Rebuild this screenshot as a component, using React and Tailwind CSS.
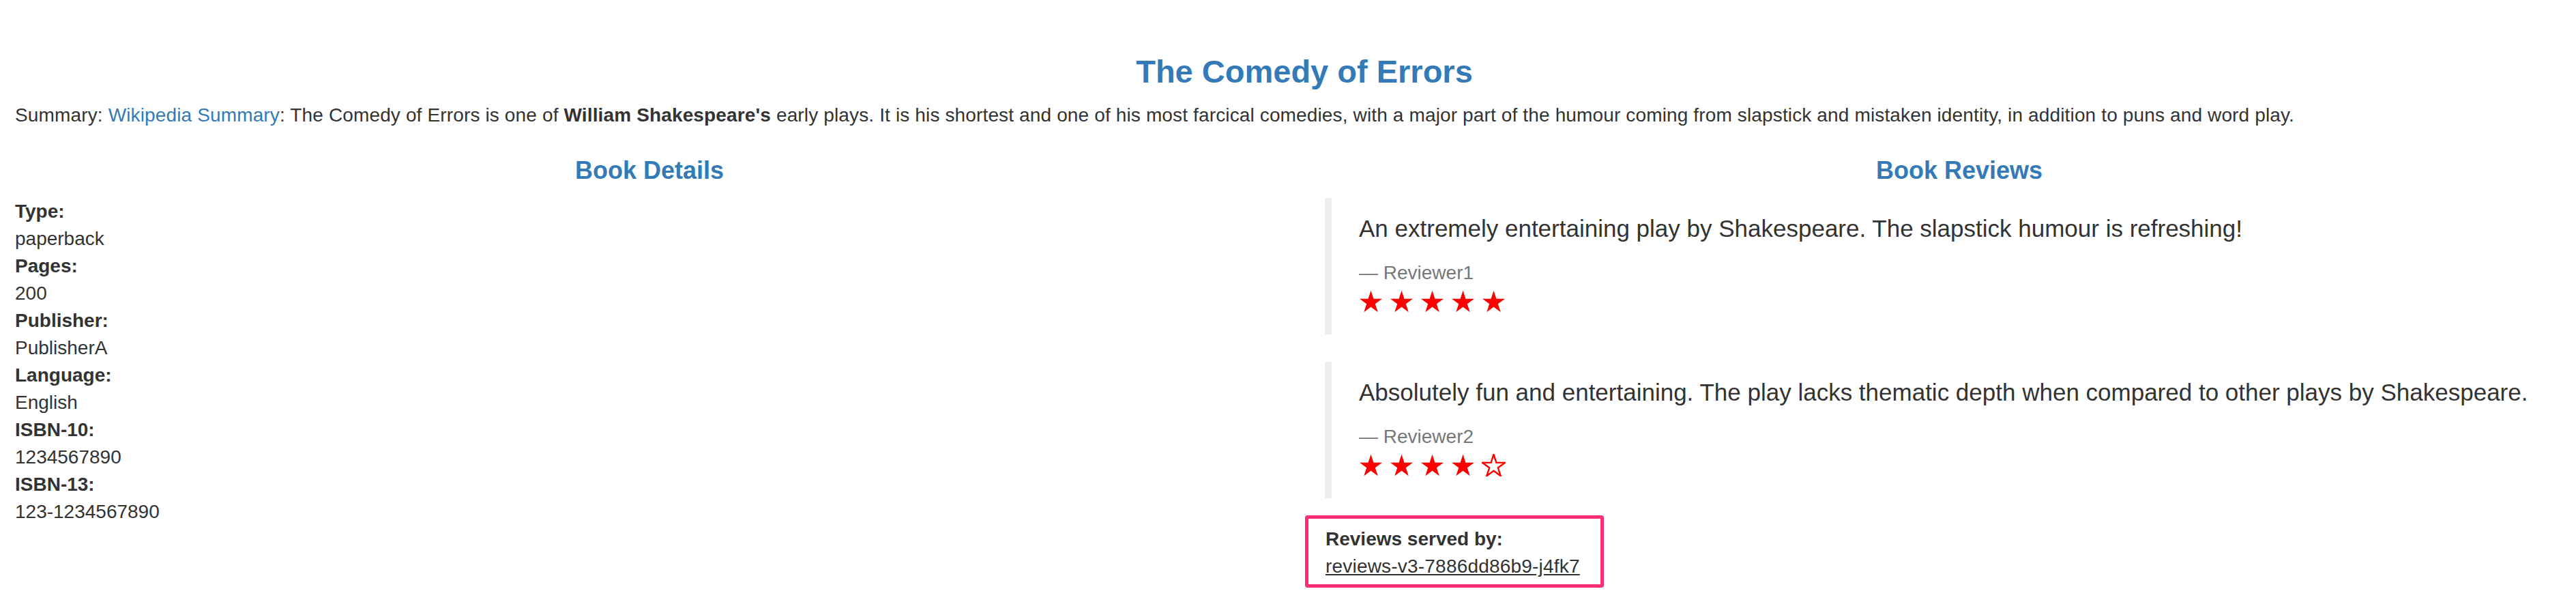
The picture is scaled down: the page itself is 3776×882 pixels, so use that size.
import React from "react";

const details = [
  ["Type:", "paperback"],
  ["Pages:", "200"],
  ["Publisher:", "PublisherA"],
  ["Language:", "English"],
  ["ISBN-10:", "1234567890"],
  ["ISBN-13:", "123-1234567890"],
];

const reviews = [
  {
    text: "An extremely entertaining play by Shakespeare. The slapstick humour is refreshing!",
    reviewer: "Reviewer1",
    stars: 5,
  },
  {
    text: "Absolutely fun and entertaining. The play lacks thematic depth when compared to other plays by Shakespeare.",
    reviewer: "Reviewer2",
    stars: 4,
  },
];

const STAR = "50,2.5 61.23,37.05 97.55,37.05 68.17,58.4 79.39,92.95 50,71.6 20.61,92.95 31.83,58.4 2.45,37.05 38.77,37.05";

const Star = ({ filled }) => (
  <svg width="35" height="33" viewBox="0 0 100 95">
    {filled ? (
      <polygon points={STAR} fill="#ff0000" />
    ) : (
      <polygon points={STAR} fill="none" stroke="#ff0000" strokeWidth="7" strokeLinejoin="miter" />
    )}
  </svg>
);

const Review = ({ review }) => (
  <blockquote className="border-l-[10px] border-[#eeeeee] px-[40px] py-[20px] mb-[40px]">
    <p className="text-[35px] leading-[50px] mb-[20px]">{review.text}</p>
    <small className="block text-[28px] leading-[40px] text-[#777777]">{"\u2014\u00a0"}{review.reviewer}</small>
    <div className="flex gap-[10px] h-[50px] pt-[5px]">
      {[0, 1, 2, 3, 4].map((i) => (
        <Star key={i} filled={i < review.stars} />
      ))}
    </div>
  </blockquote>
);

export default function App() {
  return (
    <div className="w-full h-[882px] overflow-hidden bg-white text-[#333333] font-['Liberation_Sans',Arial,sans-serif]">
      <div className="w-[3802px] pl-[22px] pt-[78px]">
        <h3 className="text-center text-[#337ab7] text-[47px] leading-[53px] font-bold mb-[18px]">
          The Comedy of Errors
        </h3>
        <p className="text-[28px] leading-[40px] tracking-[0.14px] mb-[41px]">
          Summary: <a className="text-[#337ab7]">Wikipedia Summary</a>: The Comedy of Errors is one of{" "}
          <b>William Shakespeare's</b> early plays. It is his shortest and one of his most farcical comedies, with a
          major part of the humour coming from slapstick and mistaken identity, in addition to puns and word play.
        </p>
        <div className="grid grid-cols-2 gap-[60px]">
          <div>
            <h4 className="text-center text-[#337ab7] text-[36px] leading-[40px] font-bold mb-[20px]">Book Details</h4>
            <dl className="text-[28px] leading-[40px]">
              {details.map(([k, v]) => (
                <React.Fragment key={k}>
                  <dt className="font-bold">{k}</dt>
                  <dd>{v}</dd>
                </React.Fragment>
              ))}
            </dl>
          </div>
          <div>
            <h4 className="text-center text-[#337ab7] text-[36px] leading-[40px] font-bold mb-[20px]">Book Reviews</h4>
            {reviews.map((r) => (
              <Review key={r.reviewer} review={r} />
            ))}
            <div className="w-fit -ml-[29px] -mt-[15px] border-[5px] border-[#ff2d6f] rounded-[4px] pl-[25px] pr-[30px] pt-[10px] pb-[6px]">
              <dl className="text-[28px] leading-[40px]">
                <dt className="font-bold">Reviews served by:</dt>
                <dd className="underline tracking-[0.2px]">reviews-v3-7886dd86b9-j4fk7</dd>
              </dl>
            </div>
          </div>
        </div>
      </div>
    </div>
  );
}
